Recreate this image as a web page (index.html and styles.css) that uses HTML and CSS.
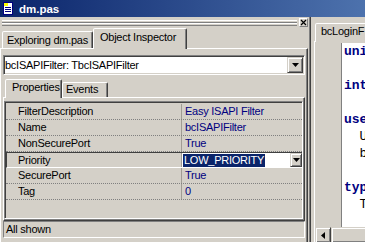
FILE: index.html
```html
<!DOCTYPE html>
<html>
<head>
<meta charset="utf-8">
<link rel="stylesheet" href="styles.css">
</head>
<body>
<div class="window">
  <div class="titlebar">
    <svg class="ticon" width="10" height="13" viewBox="0 0 10 13">
      <rect x="0.5" y="0.5" width="9" height="12" fill="#ffffff" stroke="#000080"/>
      <rect x="1" y="1" width="4" height="3" fill="#ffff00"/>
      <path d="M2 5.5h6M2 7.5h6M2 9.5h6" stroke="#000080" stroke-width="1"/>
    </svg>
    <span class="ttext">dm.pas</span>
  </div>
  <div class="main">
    <div class="left">
      <div class="grabrow">
        <div class="grabber"><div class="ridge"></div><div class="ridge"></div></div>
        <div class="closebox">
          <svg width="7" height="7" viewBox="0 0 7 7"><path d="M1 1L6 6M6 1L1 6" stroke="#000" stroke-width="1.2"/></svg>
        </div>
      </div>
      <div class="tabstrip">
        <div class="tab tab-explore">Exploring dm.pas</div>
        <div class="tab tab-oi">Object Inspector</div>
      </div>
      <div class="sheet">
        <div class="combo">
          <span class="combotext">bcISAPIFilter: TbcISAPIFilter</span>
          <div class="dropbtn"><svg width="7" height="4" viewBox="0 0 7 4"><path d="M0 0h7L3.5 4z" fill="#000"/></svg></div>
        </div>
        <div class="subtabs">
          <div class="tab tab-props">Properties</div>
          <div class="tab tab-events">Events</div>
        </div>
        <div class="subsheet">
          <div class="grid">
            <div class="row"><div class="name">FilterDescription</div><div class="value">Easy ISAPI Filter</div></div>
            <div class="row"><div class="name">Name</div><div class="value">bcISAPIFilter</div></div>
            <div class="row"><div class="name">NonSecurePort</div><div class="value">True</div></div>
            <div class="row sel"><div class="name">Priority</div><div class="value edit"><span class="hl">LOW_PRIORITY</span><div class="dropbtn small"><svg width="7" height="4" viewBox="0 0 7 4"><path d="M0 0h7L3.5 4z" fill="#000"/></svg></div></div></div>
            <div class="row"><div class="name">SecurePort</div><div class="value">True</div></div>
            <div class="row"><div class="name">Tag</div><div class="value">0</div></div>
          </div>
        </div>
        <div class="status">All shown</div>
      </div>
    </div>
    <div class="right">
      <div class="rtabstrip"><div class="tab tab-r">bcLoginF</div></div>
      <div class="rsheet">
        <div class="editor">
          <div class="gutter"></div>
          <div class="code"><div><span class="kw">unit</span> bcLoginF;</div><div> </div><div><span class="kw">interface</span></div><div> </div><div><span class="kw">uses</span></div><div>  Utils, Classes;</div><div>  bcISAPI;</div><div> </div><div><span class="kw">type</span></div><div>  TbcLoginForm = <span class="kw">class</span>(TForm)</div></div>
        </div>
        <div class="hscroll">
          <div class="sbtn"><svg width="4" height="7" viewBox="0 0 4 7"><path d="M4 0v7L0 3.5z" fill="#000"/></svg></div>
          <div class="thumb"></div>
        </div>
      </div>
    </div>
  </div>
</div>
</body>
</html>
```
FILE: styles.css
```css
* { box-sizing: border-box; }
body { margin: 0; }
.window {
  width: 365px; height: 242px; overflow: hidden;
  background: #d4d0c8;
  font-family: "Liberation Sans", Arial, sans-serif;
  font-size: 11px; letter-spacing: -0.25px; color: #000;
}
.titlebar {
  height: 17px; display: flex; align-items: center;
  background: linear-gradient(90deg, #0a246a 0%, #4d72ad 100%);
}
.ticon { margin-left: 3px; flex: none; }
.ttext { margin-left: 6px; color: #fff; font-weight: bold; font-size: 11.5px; letter-spacing: 0; }
.main { display: flex; height: 225px; overflow: hidden; }
.left { width: 308px; flex: none; display: flex; flex-direction: column; }
.grabrow { height: 11px; flex: none; display: flex; align-items: flex-start; padding-left: 2px; }
.grabber { flex: 1; margin-top: 3px; margin-right: 2px; }
.ridge { height: 3px; border-top: 1px solid #fff; border-bottom: 1px solid #808080; }
.closebox {
  width: 9px; height: 9px; margin-top: 1px; flex: none;
  border: 1px solid; border-color: #fff #808080 #808080 #fff;
  display: flex; align-items: center; justify-content: center;
}
.tabstrip { height: 20px; flex: none; display: flex; align-items: flex-end; padding-left: 2px; }
.tab {
  background: #d4d0c8; white-space: nowrap; flex: none;
  border: 1px solid; border-bottom: none;
  border-color: #fff #404040 transparent #fff;
  box-shadow: inset -1px 0 #808080;
  border-radius: 2px 2px 0 0;
}
.tab-explore { width: 91px; height: 17px; padding: 1px 0 0 4px; line-height: 15px; }
.tab-oi { width: 94px; height: 21px; margin-bottom: -1px; padding: 1px 0 0 6px; line-height: 15px; position: relative; z-index: 1; }
.sheet {
  flex: none; height: 200px;
  border-top: 1px solid #fff; border-left: 1px solid #fff; border-right: 1px solid #404040;
  box-shadow: inset -1px 0 #808080;
  padding: 6px 2px 0 2px;
  display: flex; flex-direction: column;
}
.combo {
  height: 20px; flex: none; background: #fff;
  border: 1px solid; border-color: #808080 #fff #fff #808080;
  box-shadow: inset 1px 1px #404040, inset -1px -1px #d4d0c8;
  display: flex; align-items: center; padding: 1px 1px 1px 1px;
}
.combotext { padding-left: 0; }
.dropbtn {
  width: 16px; height: 16px; margin-left: auto; flex: none; background: #d4d0c8;
  border: 1px solid; border-color: #d4d0c8 #404040 #404040 #d4d0c8;
  box-shadow: inset 1px 1px #fff, inset -1px -1px #808080;
  display: flex; align-items: center; justify-content: center;
}
.dropbtn svg { display: block; }
.dropbtn.small { width: 12px; height: 14px; }
.subtabs { height: 19px; flex: none; margin-top: 3px; display: flex; align-items: flex-end; padding-left: 2px; }
.tab-props { width: 57px; height: 19px; margin-bottom: -1px; padding: 1px 0 0 6px; line-height: 13px; position: relative; z-index: 1; }
.tab-events { width: 46px; height: 15px; padding: 0 0 0 3px; line-height: 13px; }
.subsheet {
  height: 124px; flex: none;
  border: 1px solid; border-color: #fff #404040 #404040 #fff;
  box-shadow: inset -1px -1px #808080;
  padding: 3px 1px 1px 0;
}
.grid {
  height: 118px;
  border: 1px solid; border-color: #808080 #fff #fff #808080;
  box-shadow: inset 1px 1px #404040;
  padding: 2px 0 0 1px;
}
.row { display: flex; height: 16px; border-bottom: 1px dotted #808080; line-height: 15px; }
.name { width: 176px; flex: none; padding-left: 12px; border-right: 1px solid #a09c94; white-space: nowrap; }
.value { flex: 1; padding-left: 3px; color: #000080; white-space: nowrap; }
.row.sel { border-top: 1px solid #404040; border-left: 1px solid #404040; border-bottom: 1px solid #fff; line-height: 14px; }
.row.sel .name { width: 175px; padding-left: 11px; }
.value.edit { background: #fff; display: flex; align-items: center; padding-left: 1px; }
.hl { background: #0a246a; color: #fff; padding: 0 1px; line-height: 13px; }
.status {
  height: 17px; flex: none;
  border: 1px solid; border-color: #808080 #fff #fff #808080;
  padding-left: 2px; line-height: 15px;
}
.right {
  flex: 1; margin-left: 1px;
  border-left: 1px solid #808080; box-shadow: inset 1px 0 #404040;
  padding-left: 4px;
  display: flex; flex-direction: column;
}
.rtabstrip { height: 24px; flex: none; display: flex; align-items: flex-end; padding-left: 1px; }
.tab-r { width: 60px; height: 19px; margin-bottom: -1px; padding: 1px 0 0 5px; line-height: 13px; position: relative; z-index: 1; }
.rsheet { flex: 1; border-top: 1px solid #fff; border-left: 1px solid #fff; padding-top: 1px; display: flex; flex-direction: column; }
.editor { height: 184px; flex: none; display: flex; }
.gutter { width: 27px; flex: none; border-right: 1px solid #808080; }
.code {
  flex: 1; background: #fff; padding-left: 2px;
  font-family: "Liberation Mono", "Courier New", monospace;
  font-size: 13px; line-height: 17px; letter-spacing: 0;
  white-space: pre; overflow: hidden;
}
.kw { font-weight: bold; color: #000080; }
.hscroll { height: 16px; flex: none; display: flex; background: #e8e6e2; }
.sbtn, .thumb {
  height: 16px; background: #d4d0c8;
  border: 1px solid; border-color: #d4d0c8 #404040 #404040 #d4d0c8;
  box-shadow: inset 1px 1px #fff, inset -1px -1px #808080;
}
.sbtn { width: 16px; flex: none; display: flex; align-items: center; justify-content: center; }
.sbtn svg { display: block; }
.thumb { flex: 1; }
```
